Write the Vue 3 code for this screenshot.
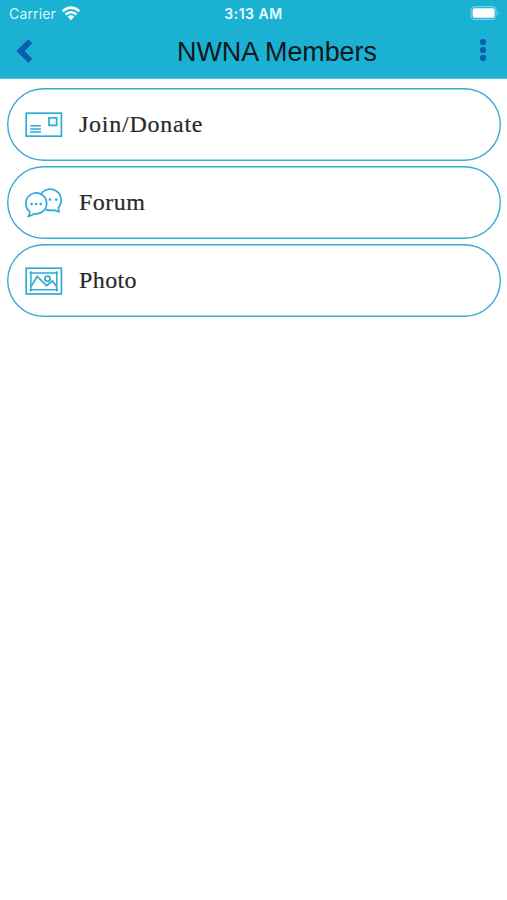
<script setup>
const items = [
  { id: 'join', label: 'Join/Donate' },
  { id: 'forum', label: 'Forum' },
  { id: 'photo', label: 'Photo' },
]
</script>

<template>
  <div class="screen">
    <header class="header">
      <div class="status">
        <div class="carrier">
          <span>Carrier</span>
          <svg class="wifi" width="20" height="15" viewBox="0 0 20 15">
            <g fill="none" stroke="#fff" stroke-width="2.5">
              <path d="M1.6 5.3Q10-2.1 18.4 5.3" />
              <path d="M4.5 8.5Q10 3.9 15.5 8.5" />
            </g>
            <path d="M6.7 10.6Q10 7.8 13.3 10.6L10 14.2Z" fill="#fff" />
          </svg>
        </div>
        <span class="time">3:13 AM</span>
        <svg class="battery" width="32" height="15" viewBox="0 0 32 15">
          <rect x="2" y="0.6" width="25" height="12.8" rx="3.8" fill="none" stroke="#75d2e7" stroke-width="1.2" />
          <rect x="3.6" y="2.3" width="22" height="9.4" rx="2" fill="#fff" />
          <path d="M28.6 5Q31 7 28.6 9Z" fill="#75d2e7" />
        </svg>
      </div>
      <div class="bar">
        <svg class="back" width="18" height="24" viewBox="0 0 18 24">
          <path d="M14.3 2.3L4.5 12L14.3 21.7" fill="none" stroke="#075fae" stroke-width="5.8" />
        </svg>
        <h1>NWNA Members</h1>
        <svg class="more" width="8" height="24" viewBox="0 0 8 24">
          <circle cx="4" cy="3.1" r="3.1" fill="#075fae" />
          <circle cx="4" cy="11" r="3.1" fill="#075fae" />
          <circle cx="4" cy="18.9" r="3.1" fill="#075fae" />
        </svg>
      </div>
    </header>
    <main class="list">
      <div v-for="item in items" :key="item.id" class="card">
        <svg class="icon" width="40" height="34" viewBox="0 0 40 34">
          <g v-if="item.id === 'join'">
            <rect x="2.2" y="5.2" width="35.2" height="23" />
            <rect x="25" y="9.8" width="7.6" height="7.6" />
            <path d="M6.2 17.7H17M6.2 20.9H17M6.2 24.1H17" stroke-width="1.5" />
          </g>
          <g v-else-if="item.id === 'forum'">
            <path d="M16.2 9.2A11.1 11.1 0 1 1 34.4 21.6L34.9 25.8L30.2 24.1Q26.2 24.9 21.6 23.6" />
            <path d="M5.6 25.4A10.4 10.4 0 1 1 10.2 27.6Q8.3 29.4 4.6 30.1Q6.1 28 5.6 25.4Z" />
            <g class="dots">
              <circle cx="7.6" cy="18" r="1.35" />
              <circle cx="12.1" cy="18" r="1.35" />
              <circle cx="16.7" cy="18" r="1.35" />
              <circle cx="26" cy="13.6" r="1.35" />
              <circle cx="32.2" cy="13.6" r="1.35" />
            </g>
          </g>
          <g v-else>
            <rect x="2.2" y="4.2" width="35.2" height="25.8" />
            <path d="M5.4 9H34M5.4 25.7H34M6.9 7.2V27.4M32.8 7.2V27.4" stroke-width="1.5" />
            <path d="M7.2 22.2L13.2 12.4L22.5 21.7L28.5 17L32.6 22.5" />
            <circle cx="23.5" cy="14.8" r="2.6" />
          </g>
        </svg>
        <span class="label" :class="item.id">{{ item.label }}</span>
      </div>
    </main>
  </div>
</template>

<style>
body {
  margin: 0;
  background: #fff;
}
</style>

<style scoped>
.screen {
  width: 507px;
  height: 900px;
  background: #fff;
  overflow: hidden;
}
.header {
  box-sizing: border-box;
  height: 79px;
  background: #1ab1d3;
  border-bottom: 1px solid #4cc3df;
}
.status {
  display: grid;
  grid-template-columns: 1fr auto 1fr;
  align-items: center;
  height: 27px;
  padding: 0 6px 0 9px;
  font-family: Inter, sans-serif;
  color: #fff;
}
.carrier {
  display: flex;
  align-items: center;
  gap: 5px;
  font-size: 14px;
  color: #dcf6fb;
  letter-spacing: 0.15px;
}
.wifi {
  margin-top: -1px;
}
.time {
  margin-left: -3px;
  font-size: 14px;
  font-weight: 600;
  letter-spacing: 0.5px;
  color: #ecfbfd;
}
.battery {
  justify-self: end;
}
.bar {
  display: grid;
  grid-template-columns: 48px 1fr 34px;
  align-items: center;
  height: 48px;
  padding-bottom: 3px;
}
.back {
  margin-left: 16px;
}
.bar h1 {
  margin: 2px 0 0;
  padding-left: 129px;
  font: 400 27px/32px "Liberation Sans", sans-serif;
  letter-spacing: -0.1px;
  color: #10181c;
  white-space: nowrap;
}
.more {
  margin-left: 6px;
}
.list {
  display: flex;
  flex-direction: column;
  gap: 4.7px;
  padding: 8.6px 6px 0 7px;
}
.card {
  box-sizing: border-box;
  display: flex;
  align-items: center;
  height: 73.4px;
  border-radius: 37px;
  box-shadow: inset 0 0 0 1.4px #3aaad6;
  padding-left: 17px;
}
.icon {
  flex: none;
  margin-top: 0.6px;
  fill: none;
  stroke: #2fa9d6;
  stroke-width: 1.7;
}
.dots {
  fill: #2fa9d6;
  stroke: none;
}
.label {
  margin: 0 0 0 15px;
  font: 400 24px/30px Georgia, "Liberation Serif", serif;
  color: #292929;
  -webkit-text-stroke: 0.2px #292929;
}
.label.join {
  letter-spacing: 0.75px;
}
.label.forum {
  letter-spacing: 0.45px;
}
.label.photo {
  letter-spacing: 0.4px;
}
</style>
